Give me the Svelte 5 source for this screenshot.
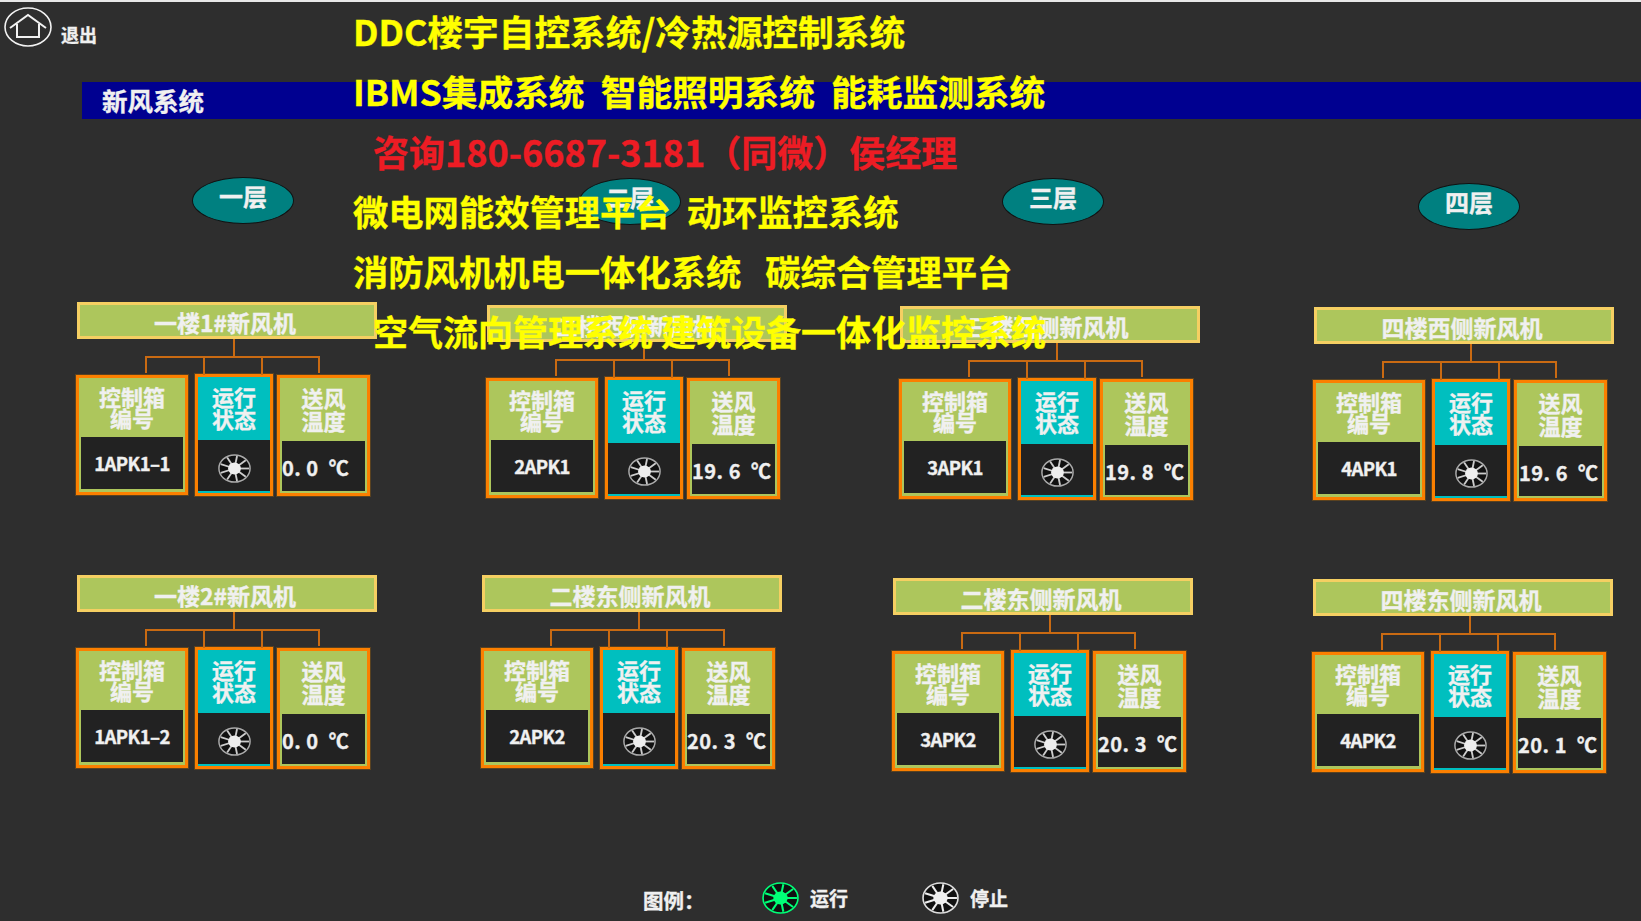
<script>
	// x, y = top left of the unit on the HMI canvas
	const units = [
		{ title: '一楼1#新风机', code: '1APK1–1', temp: '0. 0  ℃', x: 75, y: 300 },
		{ title: '二楼西侧新风机', code: '2APK1', temp: '19. 6  ℃', x: 485, y: 303 },
		{ title: '三楼西侧新风机', code: '3APK1', temp: '19. 8  ℃', x: 898, y: 304 },
		{ title: '四楼西侧新风机', code: '4APK1', temp: '19. 6  ℃', x: 1312, y: 305 },
		{ title: '一楼2#新风机', code: '1APK1–2', temp: '0. 0  ℃', x: 75, y: 573 },
		{ title: '二楼东侧新风机', code: '2APK2', temp: '20. 3  ℃', x: 480, y: 573 },
		{ title: '二楼东侧新风机', code: '3APK2', temp: '20. 3  ℃', x: 891, y: 576 },
		{ title: '四楼东侧新风机', code: '4APK2', temp: '20. 1  ℃', x: 1311, y: 577 }
	]
	const floors = [
		{ name: '一层', x: 192, y: 175 },
		{ name: '二层', x: 579, y: 176 },
		{ name: '三层', x: 1002, y: 176 },
		{ name: '四层', x: 1418, y: 181 }
	]
	const lines = [
		{ text: 'DDC楼宇自控系统/冷热源控制系统' },
		{ text: 'IBMS集成系统  智能照明系统  能耗监测系统' },
		{ text: '咨询180-6687-3181（同微）侯经理', cls: 'red' },
		{ text: '微电网能效管理平台  动环监控系统', cls: 'mid' },
		{ text: '消防风机机电一体化系统   碳综合管理平台', cls: 'mid' },
		{ text: '空气流向管理系统 建筑设备一体化监控系统', cls: 'indent' }
	]
	const spokes = [0, 40, 80, 120, 160, 200, 240, 280, 320]
</script>

{#snippet fan(color, ring, spoke)}
	<svg class="fan" viewBox="-18 -16 36 32" preserveAspectRatio="none">
		<ellipse rx="17" ry="15" fill="#111" stroke={ring} stroke-width="1.6" />
		{#each spokes as a}
			<line x1="0" y1="0" x2={16 * Math.cos(a * Math.PI / 180)} y2={14 * Math.sin(a * Math.PI / 180)} stroke={spoke} stroke-width="2" />
		{/each}
		<ellipse rx="7" ry="6.5" fill={color} />
	</svg>
{/snippet}

<div class="page">
	<div class="exit">
		<svg class="home" viewBox="0 0 48 40">
			<ellipse cx="24" cy="20" rx="23" ry="19" fill="none" stroke="#f2f2f2" stroke-width="1.6" />
			<path d="M6 21 L24 8 L42 21 M13 17 V30 H35 V17" fill="none" stroke="#f2f2f2" stroke-width="2" />
		</svg>
		<span>退出</span>
	</div>

	<div class="bar">新风系统</div>

	{#each floors as f}
		<div class="floor" style="left: {f.x}px; top: {f.y}px">{f.name}</div>
	{/each}

	{#each units as u}
		<section class="unit" style="left: {u.x}px; top: {u.y}px">
			<header>{u.title}</header>
			<div class="wires"><i></i><i></i></div>
			<div class="boxes">
				<div class="box b1">
					<h4>控制箱<br />编号</h4>
					<div class="panel code">{u.code}</div>
				</div>
				<div class="box b2">
					<h4>运行<br />状态</h4>
					<div class="panel">{@render fan('#eee', '#aaa', '#ccc')}</div>
				</div>
				<div class="box b3">
					<h4>送风<br />温度</h4>
					<div class="panel temp">{u.temp}</div>
				</div>
			</div>
		</section>
	{/each}

	<div class="legend">
		<span class="lead">图例：</span>
		<span class="item">{@render fan('#0f7', '#0f7', '#0f7')}运行</span>
		<span class="item">{@render fan('#eee', '#ddd', '#eee')}停止</span>
	</div>

	<div class="ads">
		{#each lines as l}
			<div class={l.cls}>{l.text}</div>
		{/each}
	</div>
</div>

<style>
	:global(body) {
		margin: 0;
		background: #2e2e2e;
	}
	.page {
		position: relative;
		width: 1641px;
		height: 921px;
		overflow: hidden;
		background: #2e2e2e;
		border-top: 2px solid #e8e8e8;
		box-sizing: border-box;
		font-family: "Noto Sans CJK SC", "Liberation Sans", sans-serif;
		font-weight: 700;
		color: #f0f0f0;
		-webkit-text-stroke: 0.35px currentColor;
	}
	.exit {
		position: absolute;
		left: 4px;
		top: 5px;
		display: flex;
		align-items: flex-end;
		gap: 9px;
		font-size: 18px;
		line-height: 20px;
	}
	.home {
		width: 48px;
		height: 40px;
	}
	.exit span {
		margin-bottom: 3px;
	}
	.bar {
		position: absolute;
		left: 82px;
		right: 0;
		top: 80px;
		height: 37px;
		padding-left: 20px;
		background: #000090;
		font-size: 25.5px;
		line-height: 35px;
	}
	.floor {
		position: absolute;
		width: 102px;
		height: 47px;
		box-sizing: border-box;
		border: 1px solid #111;
		border-radius: 50%;
		background: #008080;
		text-align: center;
		font-size: 24px;
		line-height: 36px;
	}
	.unit {
		position: absolute;
		width: 302px;
	}
	.unit header {
		margin-left: 2px;
		width: 300px;
		height: 37px;
		box-sizing: border-box;
		border: 3px solid #f5cf62;
		background: #adc65c;
		text-align: center;
		font-size: 23px;
		line-height: 35px;
		white-space: nowrap;
		padding-right: 4px;
	}
	.wires {
		position: relative;
		margin-left: 70px;
		width: 175px;
		height: 17px;
		margin-top: 17px;
		border: solid #c96a12;
		border-width: 2px 2px 0;
		box-sizing: border-box;
	}
	.wires::before {
		content: '';
		position: absolute;
		left: 86px;
		top: -19px;
		height: 17px;
		border-left: 2px solid #c96a12;
	}
	.wires i {
		position: absolute;
		top: 0;
		height: 17px;
		border-left: 2px solid #c96a12;
	}
	.wires i:nth-child(1) { left: 56px; }
	.wires i:nth-child(2) { left: 114px; }
	.boxes {
		display: flex;
		align-items: flex-start;
		height: 124px;
	}
	.box {
		display: flex;
		flex-direction: column;
		box-sizing: border-box;
		border: 4px solid #fb7f00;
		outline: 1px solid #5a4220;
		outline-offset: -1px;
		background: #adc65c;
		text-align: center;
	}
	.box h4 {
		margin: 0;
		font-size: 22px;
		font-weight: 700;
		line-height: 21px;
	}
	.b1 {
		width: 114px;
		height: 122px;
		padding: 0 2px 3px;
		margin-top: 1px;
	}
	.b1 h4 {
		padding-top: 8px;
		height: 51px;
	}
	.b2 {
		width: 80px;
		height: 124px;
		margin-left: 5px;
		background: #00bfbf;
		padding-bottom: 2px;
	}
	.b2 h4 {
		padding-top: 8px;
		height: 55px;
		line-height: 22px;
	}
	.b3 {
		width: 95px;
		height: 123px;
		margin-left: 2px;
		padding: 0 2px 2px;
		margin-top: 1px;
	}
	.b3 h4 {
		padding-top: 8px;
		height: 55px;
		line-height: 23px;
	}
	.panel {
		flex: 1;
		display: flex;
		align-items: center;
		justify-content: center;
		background: #222;
	}
	.code {
		font-size: 18.5px;
		letter-spacing: -0.6px;
		white-space: nowrap;
	}
	.temp {
		justify-content: flex-start;
		font-size: 20px;
		letter-spacing: 0.5px;
		white-space: pre;
		padding-top: 2px;
	}
	.fan {
		width: 37px;
		height: 32px;
		flex: none;
	}
	.panel .fan {
		width: 33px;
		height: 29px;
		margin-top: 6px;
	}
	.legend {
		position: absolute;
		left: 643px;
		top: 878px;
		display: flex;
		align-items: center;
		font-size: 20.5px;
	}
	.lead {
		width: 119px;
		padding-top: 5px;
	}
	.item {
		display: flex;
		align-items: center;
		gap: 11px;
		width: 160px;
		font-size: 19px;
		line-height: 28px;
	}
	.ads {
		position: absolute;
		left: 353px;
		top: -1px;
		color: #ff0;
		font-size: 35.7px;
		line-height: 60px;
		white-space: pre;
	}
	.ads .red {
		color: #ed1c24;
		font-size: 36px;
		margin-left: 20px;
	}
	.ads .mid {
		font-size: 35.3px;
	}
	.ads .indent {
		font-size: 35px;
		margin-left: 20px;
	}
</style>
